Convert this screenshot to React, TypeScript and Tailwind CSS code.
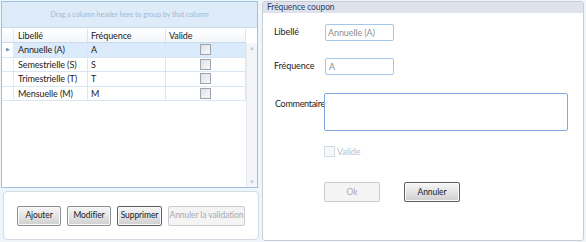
const rows = [
  { libelle: "Annuelle (A)", freq: "A", selected: true },
  { libelle: "Semestrielle (S)", freq: "S", selected: false },
  { libelle: "Trimestrielle (T)", freq: "T", selected: false },
  { libelle: "Mensuelle (M)", freq: "M", selected: false },
];

function Check({ disabled }: { disabled?: boolean }) {
  return (
    <span
      className={
        disabled
          ? "block w-[11px] h-[11px] border border-[#d6dbe2] bg-[#f6f7f9]"
          : "block w-[11px] h-[11px] border border-[#9da4ad] bg-gradient-to-br from-[#dfe2e6] to-[#f7f8f9]"
      }
    />
  );
}

function Btn({ label, w, disabled, dark }: { label: string; w: string; disabled?: boolean; dark?: boolean }) {
  if (disabled) {
    return (
      <div className={`${w} h-[20px] flex items-center justify-center whitespace-nowrap rounded-[2px] border border-[#c9ccd0] bg-[#f4f4f4] text-[#a7aaaf]`}>
        {label}
      </div>
    );
  }
  return (
    <div
      className={`${w} h-[20px] flex items-center justify-center whitespace-nowrap rounded-[2px] border ${
        dark ? "border-[#5b5f63]" : "border-[#8a8e93]"
      } bg-gradient-to-b from-[#f6f6f6] via-[#e4e4e4] to-[#cfcfcf] text-[#1a1a1a] shadow-[inset_0_0_0_1px_#fafafa]`}
    >
      {label}
    </div>
  );
}

export default function App() {
  return (
    <div
      className="w-[586px] h-[242px] bg-[#eef5fb] flex text-[9px] tracking-[-0.1px] leading-none text-[#1b1b1b] overflow-hidden whitespace-nowrap"
      style={{ fontFamily: 'Lato, "Open Sans", sans-serif' }}
    >
      {/* left column */}
      <div className="w-[260px] flex flex-col pl-[1px] pt-[1px]">
        <div className="w-[257px] h-[187px] border border-[#9fc0e6] bg-white flex flex-col">
          <div className="h-[26px] flex items-center justify-center bg-[#deebf8] border-b border-[#c5d9f0] text-[#a3b8cf] text-[7px] tracking-normal">
            Drag a column header here to group by that column
          </div>
          <div className="flex flex-1 min-h-0">
            <div className="flex-1 flex flex-col">
              <div className="h-[14px] mt-[1px] flex items-center border-b border-[#c9d9ee] bg-gradient-to-b from-white to-[#f3f6fa]">
                <div className="w-[12px] h-full border-r border-[#e3eaf3]" />
                <div className="w-[74px] h-full pl-[4px] flex items-center border-r border-[#dbe4ef]">Libellé</div>
                <div className="w-[78px] h-full pl-[3px] flex items-center border-r border-[#dbe4ef]">Fréquence</div>
                <div className="w-[80px] h-full pl-[3px] flex items-center border-r border-[#dbe4ef]">Valide</div>
                <div className="flex-1" />
              </div>
              {rows.map((r) => (
                <div key={r.libelle} className="h-[14.5px] flex items-center border-b border-[#dbe6f3]">
                  <div className="w-[12px] h-full flex items-center justify-center border-r border-[#e3eaf3]">
                    {r.selected && <span className="text-[#5d8ec6] text-[5px]">▶</span>}
                  </div>
                  <div className={`flex flex-1 h-full items-center ${r.selected ? "bg-[#dcebfb]" : ""}`}>
                    <div className="w-[74px] h-full pl-[4px] flex items-center border-r border-[#dbe6f3]">{r.libelle}</div>
                    <div className="w-[78px] h-full pl-[3px] flex items-center border-r border-[#dbe6f3]">{r.freq}</div>
                    <div className="w-[80px] h-full flex items-center justify-center border-r border-[#dbe6f3]">
                      <Check />
                    </div>
                  </div>
                </div>
              ))}
            </div>
            <div className="w-[12px] bg-[#f3f5f8] border-l border-[#e7ebf0] flex flex-col justify-between items-center py-[2px] mt-[15px]">
              <span className="text-[#c4c9cf] text-[6px] leading-none">▲</span>
              <span className="text-[#c4c9cf] text-[6px] leading-none">▼</span>
            </div>
          </div>
        </div>
        <div className="ml-[2px] mt-[3px] w-[256px] h-[49px] rounded-[4px] border border-[#d3dbe4] bg-white flex items-center pl-[13px] gap-[6px] text-[8.5px]">
          <Btn label="Ajouter" w="w-[44px]" />
          <Btn label="Modifier" w="w-[44px]" />
          <Btn label="Supprimer" w="w-[45px]" dark />
          <Btn label="Annuler la validation" w="w-[77px]" disabled />
        </div>
      </div>

      {/* right panel */}
      <div className="ml-[2px] mt-[1px] w-[322px] h-[240px] rounded-[3px] border border-[#c8ced6] bg-white flex flex-col">
        <div className="h-[11px] bg-[#dfe2ea] flex items-center pl-[4px] text-[#27436b] text-[8.5px]">
          Fréquence coupon
        </div>
        <div className="flex flex-col pl-[11px]">
          <div className="flex items-start mt-[11px]">
            <div className="w-[51px] pt-[3px]">Libellé</div>
            <div className="w-[69px] h-[17px] border border-[#a6c6ea] rounded-[2px] flex items-center pl-[2px] text-[#8c9096]">
              Annuelle (A)
            </div>
          </div>
          <div className="flex items-start mt-[17px]">
            <div className="w-[51px] pt-[3px]">Fréquence</div>
            <div className="w-[69px] h-[17px] border border-[#a6c6ea] rounded-[2px] flex items-center pl-[3px] text-[#8c9096]">
              A
            </div>
          </div>
          <div className="flex items-start mt-[18px]">
            <div className="w-[50px] pt-[6px] pl-[1px] tracking-[-0.3px]">Commentaire</div>
            <div className="w-[244px] h-[38px] border border-[#7fa9dc] rounded-[2px]" />
          </div>
          <div className="flex items-center ml-[50px] mt-[15px] gap-[2px] text-[#b4bfd3]">
            <Check disabled />
            <span>Valide</span>
          </div>
          <div className="flex ml-[50px] mt-[25px] gap-[24px] text-[8.5px]">
            <Btn label="Ok" w="w-[56px]" disabled />
            <Btn label="Annuler" w="w-[56px]" dark />
          </div>
        </div>
      </div>
    </div>
  );
}
